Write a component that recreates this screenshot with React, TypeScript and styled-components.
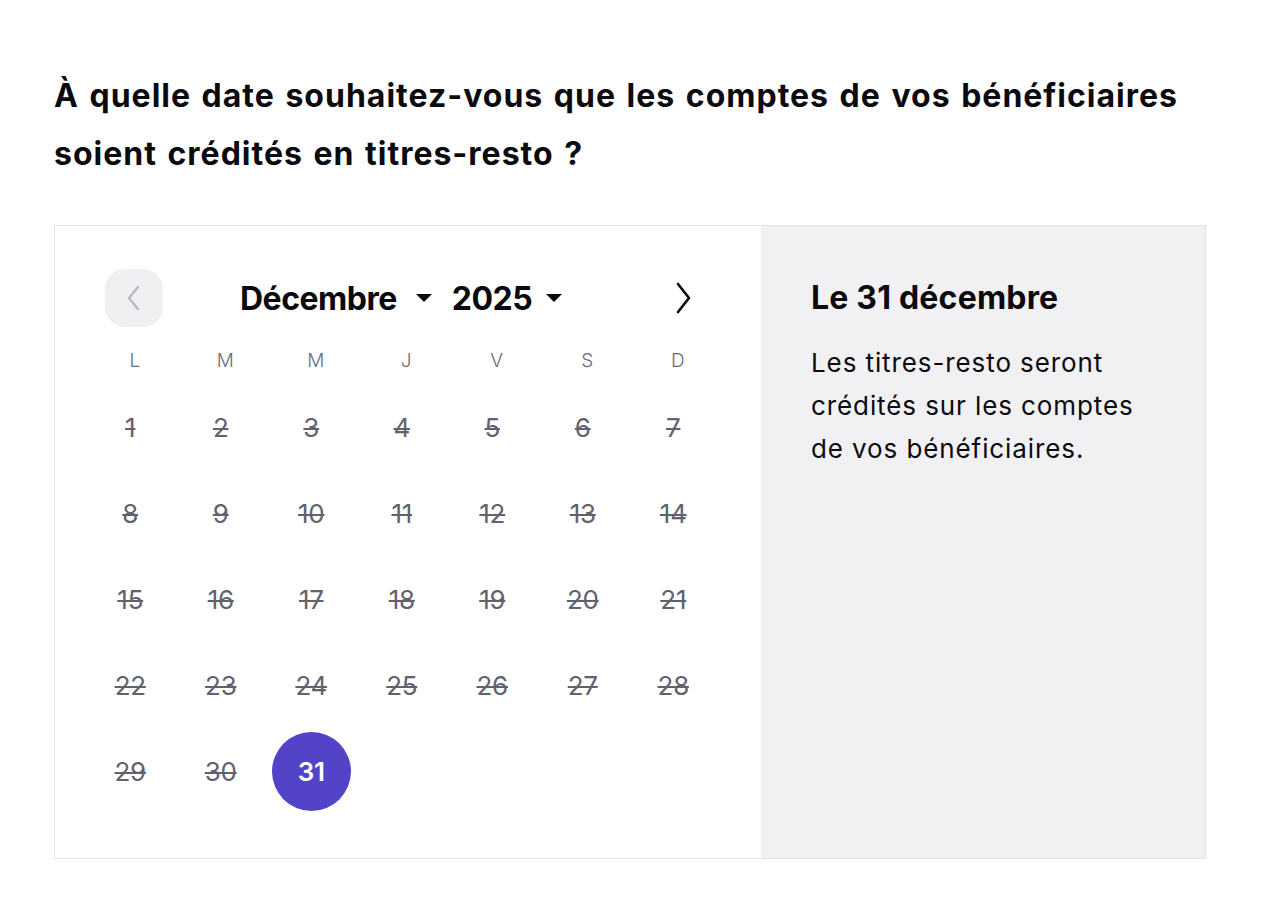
import React from "react";
import styled, { createGlobalStyle } from "styled-components";

const Global = createGlobalStyle`
  html, body { margin: 0; padding: 0; background: #ffffff; }
  body { font-family: Inter, "Noto Sans", "Liberation Sans", sans-serif; color: #0b0b0f; }
  * { box-sizing: border-box; }
`;

const Page = styled.main`
  padding: 67px 40px 40px 54px;
`;

const Heading = styled.h1`
  margin: 0;
  width: 1170px;
  font-size: 32px;
  line-height: 58px;
  font-weight: 700;
  letter-spacing: 1px;
  word-spacing: 2px;
  color: #0b0b0f;
`;

const Card = styled.section`
  margin-top: 42px;
  width: 1152px;
  height: 634px;
  border: 1px solid #e4e4e8;
  display: grid;
  grid-template-columns: 706px 1fr;
`;

const CalendarPane = styled.div`
  padding: 43px 0 0 30px;
  background: #ffffff;
`;

const Nav = styled.div`
  width: 633px;
  height: 58px;
  display: flex;
  align-items: center;
`;

const NavButton = styled.button<{ $muted?: boolean }>`
  width: 58px;
  height: 58px;
  border: none;
  border-radius: 20px;
  background: ${(p) => (p.$muted ? "#f0f0f3" : "transparent")};
  color: ${(p) => (p.$muted ? "#b8b8c8" : "#0b0b0f")};
  display: flex;
  align-items: center;
  justify-content: center;
  padding: 0;
  cursor: pointer;
  flex: none;
`;

const PrevWrap = styled.div`
  padding-left: 20px;
`;

const NextWrap = styled.div`
  padding-right: 6px;
`;

const MonthGroup = styled.div`
  flex: 1;
  display: flex;
  align-items: center;
  gap: 20px;
  padding-left: 77px;
`;

const Select = styled.div<{ $gap: number }>`
  display: flex;
  align-items: center;
  gap: ${(p) => p.$gap}px;
  font-size: 32px;
  font-weight: 700;
  letter-spacing: -0.5px;
  color: #0b0b0f;
`;

const Grid = styled.div`
  width: 633.5px;
  display: grid;
  grid-template-columns: repeat(7, 1fr);
`;

const WeekdayRow = styled(Grid)`
  margin-top: 9px;
  height: 48px;
  align-items: center;
`;

const Weekday = styled.div`
  text-align: center;
  padding-left: 9px;
  font-size: 19px;
  font-weight: 300;
  color: #6b6b7b;
`;

const DayCell = styled.div`
  height: 86px;
  display: flex;
  align-items: center;
  justify-content: center;
`;

const Day = styled.span<{ $selected?: boolean }>`
  width: 79px;
  height: 79px;
  border-radius: 50%;
  display: flex;
  align-items: center;
  justify-content: center;
  font-size: 26px;
  font-weight: ${(p) => (p.$selected ? 600 : 400)};
  letter-spacing: -0.3px;
  color: ${(p) => (p.$selected ? "#ffffff" : "#62626f")};
  background: ${(p) => (p.$selected ? "#5243c7" : "transparent")};
  text-decoration: ${(p) => (p.$selected ? "none" : "line-through")};
  text-decoration-thickness: 2px;
`;

const InfoPane = styled.aside`
  background: #f1f1f3;
  padding: 51px 40px 0 50px;
`;

const InfoTitle = styled.h2`
  margin: 0;
  font-size: 32px;
  line-height: 42px;
  font-weight: 700;
  letter-spacing: 0.2px;
  color: #0b0b0f;
`;

const InfoText = styled.p`
  margin: 22px 0 0;
  width: 345px;
  font-size: 26px;
  line-height: 43px;
  font-weight: 400;
  letter-spacing: 0.9px;
  color: #0b0b0f;
`;

const Caret = () => (
  <svg width="16" height="9" viewBox="0 0 16 9" aria-hidden>
    <path d="M0 0 L16 0 L8 8 Z" fill="#0b0b0f" />
  </svg>
);

const ChevronLeft = () => (
  <svg width="16" height="28" viewBox="0 0 16 28" aria-hidden>
    <path d="M12 3 L3 14 L12 25" fill="none" stroke="currentColor" strokeWidth="2.4" strokeLinecap="round" strokeLinejoin="round" />
  </svg>
);

const ChevronRight = () => (
  <svg width="18" height="32" viewBox="0 0 18 32" aria-hidden>
    <path d="M4 2 L15 16 L4 30" fill="none" stroke="currentColor" strokeWidth="2.6" strokeLinecap="round" strokeLinejoin="round" />
  </svg>
);

const weekdays = ["L", "M", "M", "J", "V", "S", "D"];
const days = Array.from({ length: 31 }, (_, i) => i + 1);

export default function App() {
  return (
    <>
      <Global />
      <Page>
        <Heading>
          À quelle date souhaitez-vous que les comptes de vos bénéficiaires soient crédités en titres-resto ?
        </Heading>
        <Card>
          <CalendarPane>
            <Nav>
              <PrevWrap>
                <NavButton $muted aria-label="Mois précédent">
                  <ChevronLeft />
                </NavButton>
              </PrevWrap>
              <MonthGroup>
                <Select $gap={19}>
                  Décembre <Caret />
                </Select>
                <Select $gap={14}>
                  2025 <Caret />
                </Select>
              </MonthGroup>
              <NextWrap>
                <NavButton aria-label="Mois suivant">
                  <ChevronRight />
                </NavButton>
              </NextWrap>
            </Nav>
            <WeekdayRow>
              {weekdays.map((w, i) => (
                <Weekday key={i}>{w}</Weekday>
              ))}
            </WeekdayRow>
            <Grid>
              {days.map((d) => (
                <DayCell key={d}>
                  <Day $selected={d === 31}>{d}</Day>
                </DayCell>
              ))}
            </Grid>
          </CalendarPane>
          <InfoPane>
            <InfoTitle>Le 31 décembre</InfoTitle>
            <InfoText>Les titres-resto seront crédités sur les comptes de vos bénéficiaires.</InfoText>
          </InfoPane>
        </Card>
      </Page>
    </>
  );
}
